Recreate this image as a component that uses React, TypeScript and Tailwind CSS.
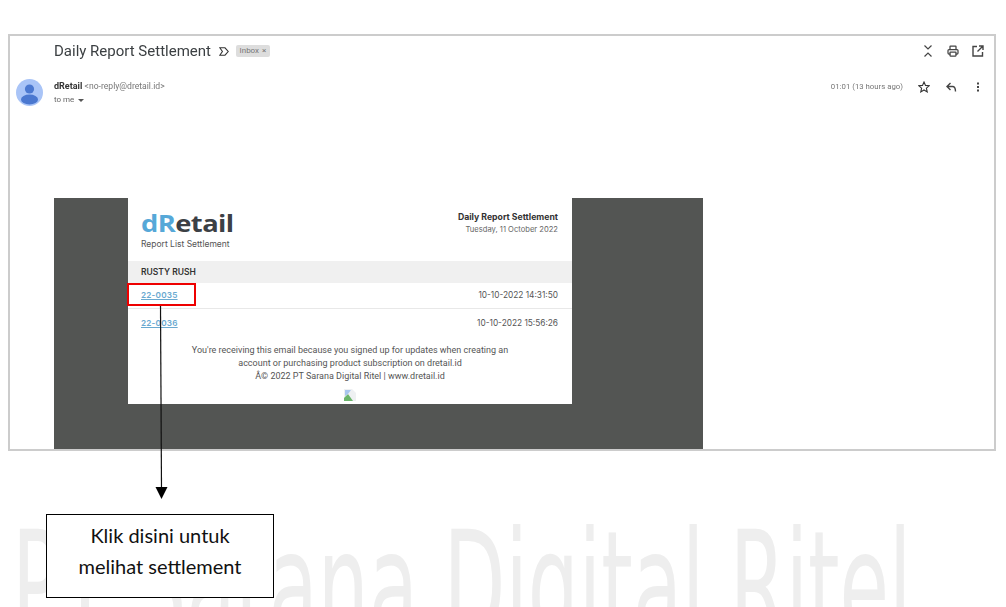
import { Printer } from "lucide-react";

function ArrowOverlay() {
  return (
    <svg className="absolute left-[150px] top-[300px]" width="24" height="202" viewBox="0 0 24 202">
      <line x1="10.5" y1="6" x2="11.5" y2="190" stroke="#111" strokeWidth="1.2" />
      <path d="M5.5 187H17.5L11.5 199Z" fill="#000" />
    </svg>
  );
}

function SettlementRow({ code, date, height }: { code: string; date: string; height: string }) {
  return (
    <div className={`flex items-center justify-between border-[#e8e8e8] pl-[13px] pr-[14px] ${height}`}>
      <a className="text-[8.2px] font-semibold tracking-[0.2px] text-[#6aa9d0] underline">{code}</a>
      <span className="text-[8.3px] text-[#555]">{date}</span>
    </div>
  );
}

function EmailCard() {
  return (
    <div className="ml-[74px] w-[444px] bg-white font-['Inter',sans-serif] text-[#444]">
      <div className="flex h-[63px] justify-between pl-[13px] pr-[14px] pt-[13px]">
        <div>
          <div className="h-[24px] origin-left scale-x-[1.14] font-['Open_Sans',sans-serif] text-[24px] leading-[24px] font-bold tracking-[-0.5px]">
            <span className="text-[#56a8d8]">dR</span>
            <span className="text-[#3c4045]">etail</span>
          </div>
          <div className="mt-[3px] text-[8.5px] leading-[12px] text-[#555]">Report List Settlement</div>
        </div>
        <div className="text-right">
          <div className="text-[8.7px] leading-[12px] font-bold text-[#333]">Daily Report Settlement</div>
          <div className="mt-[1px] text-[7.6px] leading-[12px] text-[#666]">Tuesday, 11 October 2022</div>
        </div>
      </div>
      <div className="flex h-[22px] items-center bg-[#f0f0f0] pl-[13px] text-[8.5px] font-semibold text-[#333]">RUSTY RUSH</div>
      <SettlementRow code="22-0035" date="10-10-2022 14:31:50" height="h-[26px] border-b" />
      <SettlementRow code="22-0036" date="10-10-2022 15:56:26" height="h-[28px]" />
      <div className="pt-[7px] text-center font-['Roboto',sans-serif] text-[9px] leading-[13px] text-[#555]">
        <p>You're receiving this email because you signed up for updates when creating an</p>
        <p>account or purchasing product subscription on dretail.id</p>
        <p>Â© 2022 PT Sarana Digital Ritel | www.dretail.id</p>
      </div>
      <div className="flex h-[21px] justify-center pt-[6px]">
        <svg width="12" height="12" viewBox="0 0 12 12">
          <path d="M0 0H8L12 4V12H0Z" fill="#eef0f2" />
          <path d="M0 9L4 5L9 12H0Z" fill="#6bb56b" />
          <path d="M1 1H7L4 5L1 7Z" fill="#a9c6ee" />
        </svg>
      </div>
    </div>
  );
}

export default function App() {
  return (
    <div className="relative h-[607px] w-[1006px] overflow-hidden bg-white pt-[34px] font-['Roboto',sans-serif]">
      {/* watermark behind everything */}
      <div className="absolute left-[12px] top-[497px] origin-top-left scale-x-[0.536] font-['DejaVu_Sans',sans-serif] text-[150px] leading-[178px] whitespace-nowrap text-[#eeeeee]">
        PT Sarana Digital Ritel
      </div>

      <div className="relative ml-[8px] h-[417px] w-[988px] overflow-hidden border-2 border-[#cccccc] bg-white">
        <div className="blur-[0.3px]">
          <div className="flex h-[30px] items-center pl-[44px] pr-[10px]">
            <span className="text-[15px] leading-[30px] text-[#3c4043]">Daily Report Settlement</span>
            <svg className="ml-[8px]" width="10" height="9" viewBox="0 0 10 9" fill="none" stroke="#333" strokeWidth="1.1">
              <path d="M0.8 0.8H6L9.2 4.5L6 8.2H0.8L3.4 4.5Z" />
            </svg>
            <span className="ml-[7px] flex h-[12px] w-[34px] items-center justify-center gap-[3px] rounded-[2px] bg-[#dddddd] text-[8px] text-[#777]">
              Inbox <span className="text-[8px]">×</span>
            </span>
            <div className="ml-auto flex items-center gap-[13px] text-[#444]">
              <svg width="12" height="12" viewBox="0 0 12 12" fill="none" stroke="#444" strokeWidth="1.2">
                <path d="M2.5 0.5L6 4L9.5 0.5M2.5 11.5L6 8L9.5 11.5" />
              </svg>
              <Printer size={12} strokeWidth={2.5} />
              <svg width="12" height="12" viewBox="0 0 12 12" fill="none" stroke="#444" strokeWidth="1.4">
                <path d="M5 1.5H1V11H10.5V7M7 1H11V5M11 1L5.5 6.5" />
              </svg>
            </div>
          </div>

          <div className="flex h-[37px] pl-[6px] pr-[10px] pt-[13px]">
            <svg width="27" height="27" viewBox="0 0 27 27" className="shrink-0">
              <circle cx="13.5" cy="13.5" r="13.5" fill="#a9c4f7" />
              <circle cx="13.5" cy="10" r="4.6" fill="#4b78d0" />
              <ellipse cx="13.5" cy="20.5" rx="8.5" ry="5" fill="#4b78d0" />
            </svg>
            <div className="ml-[11px] pt-[1px]">
              <div className="text-[9px] leading-[13px] text-[#777]">
                <span className="font-bold text-[#333]">dRetail</span>{" "}
                <span className="text-[8.6px]">{"<no-reply@dretail.id>"}</span>
              </div>
              <div className="mt-[1px] flex items-center gap-[4px] text-[8px] leading-[12px] text-[#666]">
                to me <span className="h-0 w-0 border-x-[3px] border-t-[3px] border-x-transparent border-t-[#555]" />
              </div>
            </div>
            <div className="ml-auto flex h-[16px] items-center text-[#444]">
              <span className="mr-[15px] text-[7.8px] text-[#777]">01:01 (13 hours ago)</span>
              <svg width="12" height="12" viewBox="0 0 12 12" fill="none" stroke="#333" strokeWidth="1.1">
                <path d="M6 1L7.5 4.4L11.2 4.8L8.4 7.2L9.2 10.9L6 9L2.8 10.9L3.6 7.2L0.8 4.8L4.5 4.4Z" />
              </svg>
              <svg className="ml-[15px]" width="12" height="12" viewBox="0 0 12 12" fill="none" stroke="#444" strokeWidth="1.4">
                <path d="M5.5 2L2 5.5L5.5 9M2 5.5H7.5C9.5 5.5 10.5 7 10.5 10.5" />
              </svg>
              <svg className="ml-[15px]" width="12" height="12" viewBox="0 0 12 12" fill="#444">
                <rect x="5" y="1.5" width="2" height="2" />
                <rect x="5" y="5" width="2" height="2" />
                <rect x="5" y="8.5" width="2" height="2" />
              </svg>
            </div>
          </div>

          <div className="mt-[95px] ml-[44px] flex h-[252px] w-[649px] items-start bg-[#535553]">
            <EmailCard />
          </div>
        </div>
      </div>

      {/* red highlight and arrow drawn over the screenshot */}
      <div className="absolute left-[127px] top-[283px] h-[23px] w-[69px] border-2 border-[#ee0000]" />
      <ArrowOverlay />

      <div className="relative mt-[63px] ml-[46px] flex h-[84px] w-[228px] items-center justify-center border border-black bg-white pb-[10px] text-center font-['Lato',sans-serif] text-[20px] leading-[31px] text-[#111]">
        <p>
          Klik disini untuk
          <br />
          melihat settlement
        </p>
      </div>
    </div>
  );
}
